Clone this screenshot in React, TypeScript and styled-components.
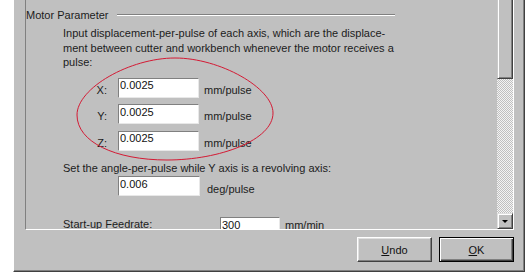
import React from 'react';
import styled, { createGlobalStyle } from 'styled-components';

const GlobalStyle = createGlobalStyle`
  html, body {
    margin: 0;
    padding: 0;
    background: #fff;
  }
  body {
    font-family: "Liberation Sans", Arial, sans-serif;
    font-size: 11px;
    color: #1c1c1c;
  }
`;

const Dialog = styled.div`
  box-sizing: border-box;
  margin-left: 13px;
  width: 512px;
  height: 272px;
  background: #c0c0c0;
  border-left: 1px solid #fff;
  border-right: 1px solid #404040;
  border-bottom: 1px solid #404040;
  box-shadow: inset -1px -1px 0 #808080;
  padding: 0 10px 0 11px;
  display: flex;
  flex-direction: column;
`;

const ScrollPanel = styled.div`
  box-sizing: border-box;
  height: 230px;
  border-left: 1px solid #808080;
  border-right: 1px solid #fff;
  border-bottom: 1px solid #fff;
  display: flex;
`;

const Content = styled.div`
  position: relative;
  flex: 1;
  overflow: hidden;
`;

const GroupHeader = styled.div`
  display: flex;
  align-items: center;
  margin-top: 8px;
  height: 14px;
  line-height: 14px;
`;

const GroupLine = styled.div`
  margin-left: 8px;
  width: 278px;
  height: 0;
  border-top: 1px solid #808080;
  border-bottom: 1px solid #fff;
`;

const Paragraph = styled.div<{ $top: number }>`
  margin: ${(p) => p.$top}px 0 0 37px;
  line-height: 14.5px;
  white-space: nowrap;
`;

const Row = styled.div<{ $top: number }>`
  display: flex;
  align-items: flex-start;
  margin-top: ${(p) => p.$top}px;
  height: 20px;
`;

const AxisLabel = styled.div<{ $width: number; $indent?: number; $drop: number }>`
  box-sizing: border-box;
  width: ${(p) => p.$width}px;
  margin-left: ${(p) => p.$indent || 0}px;
  padding-top: ${(p) => p.$drop}px;
  text-align: ${(p) => (p.$indent ? 'left' : 'right')};
  line-height: 14px;
  white-space: nowrap;
`;

const Field = styled.input<{ $width: number }>`
  box-sizing: border-box;
  width: ${(p) => p.$width}px;
  height: 20px;
  margin: 0;
  padding: 0 0 5px 1px;
  font: inherit;
  line-height: 13px;
  color: #111;
  background: #fff;
  border: none;
  border-top: 1px solid #808080;
  border-left: 1px solid #808080;
  border-right: 1px solid #e8e8e8;
  border-bottom: 1px solid #e8e8e8;
  outline: none;
`;

const Unit = styled.div<{ $gap: number; $drop: number }>`
  margin-left: ${(p) => p.$gap}px;
  padding-top: ${(p) => p.$drop}px;
  line-height: 14px;
  white-space: nowrap;
`;

const Annotation = styled.svg`
  position: absolute;
  left: 0;
  top: 0;
  pointer-events: none;
`;

const ScrollBar = styled.div`
  width: 16px;
  display: flex;
  flex-direction: column;
  background: repeating-conic-gradient(#c0c0c0 0 25%, #f4f4f4 0 50%) 0 0 / 2px 2px;
`;

const Thumb = styled.div`
  box-sizing: border-box;
  height: 79px;
  background: #c0c0c0;
  border-left: 1px solid #c8c8c8;
  border-right: 1px solid #404040;
  border-bottom: 1px solid #404040;
  box-shadow: inset 1px 0 0 #fff, inset -1px -1px 0 #808080;
`;

const Track = styled.div`
  flex: 1;
`;

const ArrowButton = styled.div`
  box-sizing: border-box;
  height: 16px;
  background: #c0c0c0;
  border-top: 1px solid #e0e0e0;
  border-left: 1px solid #e0e0e0;
  border-right: 1px solid #404040;
  border-bottom: 1px solid #404040;
  box-shadow: inset 1px 1px 0 #fff, inset -1px -1px 0 #808080;
  display: flex;
  align-items: center;
  justify-content: center;
`;

const DownArrow = styled.span`
  width: 0;
  height: 0;
  margin-top: 1px;
  border-left: 3px solid transparent;
  border-right: 3px solid transparent;
  border-top: 3px solid #000;
`;

const ButtonRow = styled.div`
  display: flex;
  justify-content: flex-end;
  gap: 7px;
  margin-top: 7px;
`;

const Button = styled.button<{ $default?: boolean }>`
  box-sizing: border-box;
  width: 75px;
  height: 25px;
  margin: 0;
  padding: 0;
  font: inherit;
  color: #111;
  background: #c0c0c0;
  border: 1px solid ${(p) => (p.$default ? '#000' : '#404040')};
  ${(p) =>
    p.$default
      ? 'box-shadow: inset 1px 1px 0 #fff, inset -1px -1px 0 #404040, inset -2px -2px 0 #808080;'
      : 'border-top-color: #fff; border-left-color: #fff; box-shadow: inset -1px -1px 0 #808080, inset 1px 1px 0 #dfdfdf;'}
`;

const axes = ['X', 'Y', 'Z'];

const App = () => {
  return (
    <>
      <GlobalStyle />
      <Dialog>
        <ScrollPanel>
          <Content>
            <GroupHeader>
              Motor Parameter
              <GroupLine />
            </GroupHeader>
            <Paragraph $top={4}>
              Input displacement-per-pulse of each axis, which are the displace-
              <br />
              ment between cutter and workbench whenever the motor receives a
              <br />
              pulse:
            </Paragraph>
            {axes.map((axis, i) => (
              <Row key={axis} $top={i === 0 ? 8 : 6.5}>
                <AxisLabel $width={92} $drop={5} style={{ paddingRight: 11 }}>
                  {axis}:
                </AxisLabel>
                <Field $width={81} readOnly value="0.0025" />
                <Unit $gap={5} $drop={5}>
                  mm/pulse
                </Unit>
              </Row>
            ))}
            <Paragraph $top={10}>Set the angle-per-pulse while Y axis is a revolving axis:</Paragraph>
            <Row $top={1}>
              <AxisLabel $width={92} $drop={0} />
              <Field $width={82} readOnly value="0.006" />
              <Unit $gap={7} $drop={6}>
                deg/pulse
              </Unit>
            </Row>
            <Row $top={21}>
              <AxisLabel $width={157} $indent={37} $drop={0}>
                Start-up Feedrate:
              </AxisLabel>
              <Field $width={60} readOnly value="300" />
              <Unit $gap={5} $drop={1}>
                mm/min
              </Unit>
            </Row>
            <Annotation width={471} height={229} viewBox="26 0 471 229">
              <path
                d="M 77 115 C 77 88, 130 58, 175 58 C 220 58, 273 88, 273 113 C 273 140, 220 160, 167 160 C 115 160, 77 142, 77 115 Z"
                fill="none"
                stroke="#d41a34"
                strokeWidth={1}
              />
            </Annotation>
          </Content>
          <ScrollBar>
            <Thumb />
            <Track />
            <ArrowButton>
              <DownArrow />
            </ArrowButton>
          </ScrollBar>
        </ScrollPanel>
        <ButtonRow>
          <Button>
            <u>U</u>ndo
          </Button>
          <Button $default>
            <u>O</u>K
          </Button>
        </ButtonRow>
      </Dialog>
    </>
  );
};

export default App;
